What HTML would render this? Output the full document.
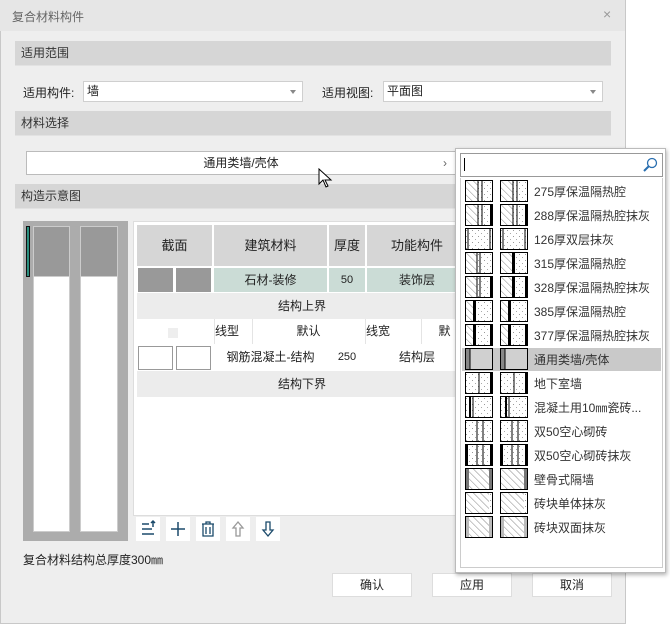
<!DOCTYPE html>
<html><head><meta charset="utf-8"><style>
*{box-sizing:border-box;margin:0;padding:0}
body{width:670px;height:625px;background:#fff;font-family:"Liberation Sans","Noto Sans CJK SC",sans-serif;font-size:12px;color:#222;position:relative;overflow:hidden}
.a{position:absolute}
.dlg{left:0;top:0;width:626px;height:624px;background:#eeeeee;border:1px solid #c8c8c8}
.title{left:0;top:0;width:625px;height:31px;background:#e6e6e6}
.sec{left:15px;width:596px;height:25px;background:#d6d6d6;border-bottom:1px solid #e2e2e2;padding-left:6px;line-height:25px;color:#333}
.combo{height:21px;background:#fff;border:1px solid #cfcfcf;line-height:19px;padding-left:3px}
.combo:after{content:"";position:absolute;right:6px;top:8px;border:3px solid transparent;border-top:4px solid #888}
.btn{height:24px;background:#fff;border:1px solid #ddd;text-align:center;line-height:22px}
.cell{position:absolute;text-align:center}
.pop{left:455px;top:148px;width:211px;height:425px;background:#fff;border:1px solid #bbb;box-shadow:1px 2px 4px rgba(0,0,0,.3)}
.row{position:absolute;left:6px;width:199px;height:23px}
.row svg{position:absolute;top:0}
.row span{position:absolute;left:72px;top:3px;font-size:12px;color:#333}
.tb{position:absolute;top:517px;width:24px;height:24px;background:#fff}
</style></head><body>
<svg width="0" height="0" style="position:absolute"><defs>
<pattern id="h" width="5" height="5" patternUnits="userSpaceOnUse" patternTransform="rotate(-45)"><rect width="5" height="5" fill="#fff"/><line x1="0" y1="0" x2="0" y2="5" stroke="#888" stroke-width="1"/></pattern>
<pattern id="d" width="6" height="6" patternUnits="userSpaceOnUse"><rect width="6" height="6" fill="#fff"/><rect x="1" y="2" width="1" height="1" fill="#999"/><rect x="4" y="5" width="1" height="1" fill="#aaa"/></pattern>
</defs></svg>
<div class="a dlg"></div>
<div class="a title"></div>
<div class="a" style="left:12px;top:8px;color:#666;font-size:12px">复合材料构件</div>
<div class="a" style="left:603px;top:6px;color:#999;font-size:14px">×</div>

<div class="a sec" style="top:41px">适用范围</div>
<div class="a" style="left:23px;top:84px">适用构件:</div>
<div class="a combo" style="left:83px;top:81px;width:220px">墙</div>
<div class="a" style="left:322px;top:84px">适用视图:</div>
<div class="a combo" style="left:383px;top:81px;width:220px">平面图</div>
<div class="a sec" style="top:111px">材料选择</div>
<div class="a btn" style="left:26px;top:151px;width:430px;border-color:#bbb">通用类墙/壳体<span style="position:absolute;right:8px;color:#666">›</span></div>
<div class="a sec" style="top:184px">构造示意图</div>

<div class="a" style="left:23px;top:221px;width:105px;height:320px;background:#acacac"></div>
<div class="a" style="left:26px;top:226px;width:4px;height:51px;background:#2b9080;border:1px solid #111"></div>
<div class="a" style="left:33px;top:226px;width:37px;height:306px;background:#fff;border:1px solid #ccc"></div>
<div class="a" style="left:33px;top:226px;width:37px;height:51px;background:#999;border:1px solid #ccc"></div>
<div class="a" style="left:80px;top:226px;width:38px;height:306px;background:#fff;border:1px solid #ccc"></div>
<div class="a" style="left:80px;top:226px;width:38px;height:51px;background:#999;border:1px solid #ccc"></div>

<div class="a" style="left:133px;top:221px;width:330px;height:295px;background:#fff;border:1px solid #ddd">
<div class="cell" style="left:3px;top:3px;width:75px;height:41px;background:#d6d6d6;line-height:41px;font-size:13px">截面</div>
<div class="cell" style="left:80px;top:3px;width:113px;height:41px;background:#d6d6d6;line-height:41px;font-size:13px">建筑材料</div>
<div class="cell" style="left:195px;top:3px;width:36px;height:41px;background:#d6d6d6;line-height:41px;font-size:13px">厚度</div>
<div class="cell" style="left:233px;top:3px;width:100px;height:41px;background:#d6d6d6;line-height:41px;font-size:13px">功能构件</div>
<div class="cell" style="left:4px;top:46px;width:35px;height:24px;background:#999"></div>
<div class="cell" style="left:42px;top:46px;width:35px;height:24px;background:#999"></div>
<div class="cell" style="left:80px;top:46px;width:113px;height:24px;background:#cbdcd6;line-height:24px">石材-装修</div>
<div class="cell" style="left:195px;top:46px;width:36px;height:24px;background:#cbdcd6;line-height:24px;font-size:11px">50</div>
<div class="cell" style="left:233px;top:46px;width:100px;height:24px;background:#cbdcd6;line-height:24px">装饰层</div>
<div class="cell" style="left:3px;top:71px;width:330px;height:26px;background:#ececec;line-height:26px">结构上界</div>
<div class="cell" style="left:34px;top:106px;width:10px;height:10px;background:#eee"></div>
<div class="cell" style="left:80px;top:97px;width:38px;height:25px;line-height:25px;text-align:left;border-left:1px solid #e4e4e4">线型</div>
<div class="cell" style="left:118px;top:97px;width:112px;height:25px;line-height:25px;border-left:1px solid #e4e4e4">默认</div>
<div class="cell" style="left:231px;top:97px;width:56px;height:25px;line-height:25px;text-align:left;border-left:1px solid #e4e4e4">线宽</div>
<div class="cell" style="left:287px;top:97px;width:46px;height:25px;line-height:25px;border-left:1px solid #e4e4e4">默</div>
<div class="cell" style="left:4px;top:124px;width:35px;height:24px;border:1px solid #999"></div>
<div class="cell" style="left:42px;top:124px;width:35px;height:24px;border:1px solid #999"></div>
<div class="cell" style="left:80px;top:123px;width:113px;height:25px;line-height:25px">钢筋混凝土-结构</div>
<div class="cell" style="left:195px;top:123px;width:36px;height:25px;line-height:25px;font-size:11px">250</div>
<div class="cell" style="left:233px;top:123px;width:100px;height:25px;line-height:25px">结构层</div>
<div class="cell" style="left:3px;top:149px;width:330px;height:26px;background:#ececec;line-height:26px">结构下界</div>
</div>

<div class="tb" style="left:136px"><svg width="24" height="24"><g stroke="#1b4a6b" stroke-width="1.5" fill="none"><path d="M6 7h7M6 12h10M6 17h12M17 10V4M15 6l2-2 2 2"/></g></svg></div>
<div class="tb" style="left:166px"><svg width="24" height="24"><path d="M12 5v14M5 12h14" stroke="#1b4a6b" stroke-width="1.5"/></svg></div>
<div class="tb" style="left:196px"><svg width="24" height="24"><g stroke="#1b4a6b" stroke-width="1.3" fill="none"><path d="M6 7h12M10 7V5h4v2M7 7v12h10V7M10 10v7M14 10v7"/></g></svg></div>
<div class="tb" style="left:226px"><svg width="24" height="24"><path d="M12 5l-5 6h3v8h4v-8h3z" fill="none" stroke="#999" stroke-width="1.3"/></svg></div>
<div class="tb" style="left:256px"><svg width="24" height="24"><path d="M12 19l-5-6h3V5h4v8h3z" fill="none" stroke="#1b4a6b" stroke-width="1.3"/></svg></div>

<div class="a" style="left:23px;top:551px">复合材料结构总厚度300㎜</div>
<div class="a btn" style="left:332px;top:573px;width:80px">确认</div>
<div class="a btn" style="left:432px;top:573px;width:80px">应用</div>
<div class="a btn" style="left:532px;top:573px;width:80px">取消</div>

<svg class="a" style="left:318px;top:168px" width="16" height="22"><path d="M1 1v15l4-4 3 7 2-1-3-6h6z" fill="#fff" stroke="#000"/></svg>

<div class="a pop">
<div class="a" style="left:4px;top:4px;width:203px;height:24px;border:1px solid #999"></div>
<div class="a" style="left:8px;top:9px;width:1px;height:13px;background:#000"></div>
<svg class="a" style="left:186px;top:8px" width="16" height="16"><circle cx="10" cy="6" r="4.5" fill="none" stroke="#2a6fb0" stroke-width="1.3"/><path d="M7 9l-5 5" stroke="#2a6fb0" stroke-width="2"/></svg>
<div class="a" style="left:4px;top:29px;width:203px;height:390px;border:1px solid #ccc;border-top:none"></div>

<div class="row" style="top:31px"><svg width="28" height="22" style="left:3px"><rect x=".5" y=".5" width="27" height="21" fill="url(#d)" stroke="#000"/><rect x="1" y="1" width="12" height="20" fill="url(#h)"/><path d="M13 1v20M17 1v20" stroke="#000"/></svg><svg width="28" height="22" style="left:38px"><rect x=".5" y=".5" width="27" height="21" fill="url(#d)" stroke="#000"/><rect x="1" y="1" width="12" height="20" fill="url(#h)"/><path d="M13 1v20M17 1v20" stroke="#000"/></svg><span>275厚保温隔热腔</span></div>
<div class="row" style="top:55px"><svg width="28" height="22" style="left:3px"><rect x=".5" y=".5" width="27" height="21" fill="url(#d)" stroke="#000"/><rect x="1" y="1" width="12" height="20" fill="url(#h)"/><path d="M13 1v20M17 1v20" stroke="#000"/><rect x="25" y="1" width="2" height="20"/></svg><svg width="28" height="22" style="left:38px"><rect x=".5" y=".5" width="27" height="21" fill="url(#d)" stroke="#000"/><rect x="1" y="1" width="12" height="20" fill="url(#h)"/><path d="M13 1v20M17 1v20" stroke="#000"/><rect x="25" y="1" width="2" height="20"/></svg><span>288厚保温隔热腔抹灰</span></div>
<div class="row" style="top:79px"><svg width="28" height="22" style="left:3px"><rect x=".5" y=".5" width="27" height="21" fill="url(#d)" stroke="#000"/><path d="M3 1v20M25 1v20" stroke="#000"/></svg><svg width="28" height="22" style="left:38px"><rect x=".5" y=".5" width="27" height="21" fill="url(#d)" stroke="#000"/><path d="M3 1v20M25 1v20" stroke="#000"/></svg><span>126厚双层抹灰</span></div>
<div class="row" style="top:103px"><svg width="28" height="22" style="left:3px"><rect x=".5" y=".5" width="27" height="21" fill="url(#d)" stroke="#000"/><rect x="1" y="1" width="11" height="20" fill="url(#h)"/><path d="M12 1v20M15 1v20" stroke="#000"/></svg><svg width="28" height="22" style="left:38px"><rect x=".5" y=".5" width="27" height="21" fill="url(#d)" stroke="#000"/><rect x="1" y="1" width="11" height="20" fill="url(#h)"/><rect x="12" y="1" width="3" height="20"/></svg><span>315厚保温隔热腔</span></div>
<div class="row" style="top:127px"><svg width="28" height="22" style="left:3px"><rect x=".5" y=".5" width="27" height="21" fill="url(#d)" stroke="#000"/><rect x="1" y="1" width="11" height="20" fill="url(#h)"/><path d="M12 1v20M15 1v20" stroke="#000"/><rect x="25" y="1" width="2" height="20"/></svg><svg width="28" height="22" style="left:38px"><rect x=".5" y=".5" width="27" height="21" fill="url(#d)" stroke="#000"/><rect x="1" y="1" width="11" height="20" fill="url(#h)"/><rect x="12" y="1" width="3" height="20"/><rect x="25" y="1" width="2" height="20"/></svg><span>328厚保温隔热腔抹灰</span></div>
<div class="row" style="top:151px"><svg width="28" height="22" style="left:3px"><rect x=".5" y=".5" width="27" height="21" fill="url(#d)" stroke="#000"/><rect x="1" y="1" width="7" height="20" fill="url(#h)"/><rect x="8" y="1" width="3" height="20"/></svg><svg width="28" height="22" style="left:38px"><rect x=".5" y=".5" width="27" height="21" fill="url(#d)" stroke="#000"/><rect x="1" y="1" width="7" height="20" fill="url(#h)"/><rect x="8" y="1" width="3" height="20"/></svg><span>385厚保温隔热腔</span></div>
<div class="row" style="top:175px"><svg width="28" height="22" style="left:3px"><rect x=".5" y=".5" width="27" height="21" fill="url(#d)" stroke="#000"/><rect x="1" y="1" width="7" height="20" fill="url(#h)"/><rect x="8" y="1" width="3" height="20"/><rect x="25" y="1" width="2" height="20"/></svg><svg width="28" height="22" style="left:38px"><rect x=".5" y=".5" width="27" height="21" fill="url(#d)" stroke="#000"/><rect x="1" y="1" width="7" height="20" fill="url(#h)"/><rect x="8" y="1" width="3" height="20"/><rect x="25" y="1" width="2" height="20"/></svg><span>377厚保温隔热腔抹灰</span></div>
<div class="row" style="top:199px;background:#c9c9c9;width:199px"><svg width="28" height="22" style="left:3px"><rect x=".5" y=".5" width="27" height="21" fill="#d0d0d0" stroke="#000"/><rect x="1" y="1" width="4" height="20" fill="#888"/><path d="M5 1v20" stroke="#000"/></svg><svg width="28" height="22" style="left:38px"><rect x=".5" y=".5" width="27" height="21" fill="#d0d0d0" stroke="#000"/><rect x="1" y="1" width="4" height="20" fill="#888"/><path d="M5 1v20" stroke="#000"/></svg><span>通用类墙/壳体</span></div>
<div class="row" style="top:223px"><svg width="28" height="22" style="left:3px"><rect x=".5" y=".5" width="27" height="21" fill="url(#d)" stroke="#000"/><path d="M14 1v20" stroke="#000"/><rect x="25" y="1" width="2" height="20"/></svg><svg width="28" height="22" style="left:38px"><rect x=".5" y=".5" width="27" height="21" fill="url(#d)" stroke="#000"/><path d="M14 1v20" stroke="#000"/><rect x="25" y="1" width="2" height="20"/></svg><span>地下室墙</span></div>
<div class="row" style="top:247px"><svg width="28" height="22" style="left:3px"><rect x=".5" y=".5" width="27" height="21" fill="url(#d)" stroke="#000"/><rect x="4" y="1" width="2" height="20"/><path d="M8 1v20" stroke="#000"/></svg><svg width="28" height="22" style="left:38px"><rect x=".5" y=".5" width="27" height="21" fill="url(#d)" stroke="#000"/><rect x="5" y="1" width="2" height="20"/><path d="M9 1v20" stroke="#000"/></svg><span>混凝土用10㎜瓷砖...</span></div>
<div class="row" style="top:271px"><svg width="28" height="22" style="left:3px"><rect x=".5" y=".5" width="27" height="21" fill="url(#d)" stroke="#000"/><path d="M12 1v20M18 1v20" stroke="#000"/></svg><svg width="28" height="22" style="left:38px"><rect x=".5" y=".5" width="27" height="21" fill="url(#d)" stroke="#000"/><path d="M12 1v20M18 1v20" stroke="#000"/></svg><span>双50空心砌砖</span></div>
<div class="row" style="top:295px"><svg width="28" height="22" style="left:3px"><rect x=".5" y=".5" width="27" height="21" fill="url(#d)" stroke="#000"/><rect x="1" y="1" width="2" height="20"/><path d="M12 1v20M18 1v20" stroke="#000"/><rect x="25" y="1" width="2" height="20"/></svg><svg width="28" height="22" style="left:38px"><rect x=".5" y=".5" width="27" height="21" fill="url(#d)" stroke="#000"/><rect x="1" y="1" width="2" height="20"/><path d="M12 1v20M18 1v20" stroke="#000"/><rect x="25" y="1" width="2" height="20"/></svg><span>双50空心砌砖抹灰</span></div>
<div class="row" style="top:319px"><svg width="28" height="22" style="left:3px"><rect x=".5" y=".5" width="27" height="21" fill="url(#h)" stroke="#000"/><rect x="1" y="1" width="3" height="20" fill="#777"/><rect x="24" y="1" width="3" height="20" fill="#777"/></svg><svg width="28" height="22" style="left:38px"><rect x=".5" y=".5" width="27" height="21" fill="url(#h)" stroke="#000"/><rect x="24" y="1" width="3" height="20" fill="#777"/></svg><span>壁骨式隔墙</span></div>
<div class="row" style="top:343px"><svg width="28" height="22" style="left:3px"><rect x=".5" y=".5" width="27" height="21" fill="url(#h)" stroke="#000"/><rect x="24" y="1" width="3" height="20" fill="url(#d)"/></svg><svg width="28" height="22" style="left:38px"><rect x=".5" y=".5" width="27" height="21" fill="url(#h)" stroke="#000"/><rect x="24" y="1" width="3" height="20" fill="url(#d)"/></svg><span>砖块单体抹灰</span></div>
<div class="row" style="top:367px"><svg width="28" height="22" style="left:3px"><rect x=".5" y=".5" width="27" height="21" fill="url(#h)" stroke="#000"/><rect x="1" y="1" width="3" height="20" fill="#bbb"/><rect x="24" y="1" width="3" height="20" fill="#bbb"/></svg><svg width="28" height="22" style="left:38px"><rect x=".5" y=".5" width="27" height="21" fill="url(#h)" stroke="#000"/><rect x="1" y="1" width="3" height="20" fill="#bbb"/><rect x="24" y="1" width="3" height="20" fill="#bbb"/></svg><span>砖块双面抹灰</span></div>
</div>
</body></html>
